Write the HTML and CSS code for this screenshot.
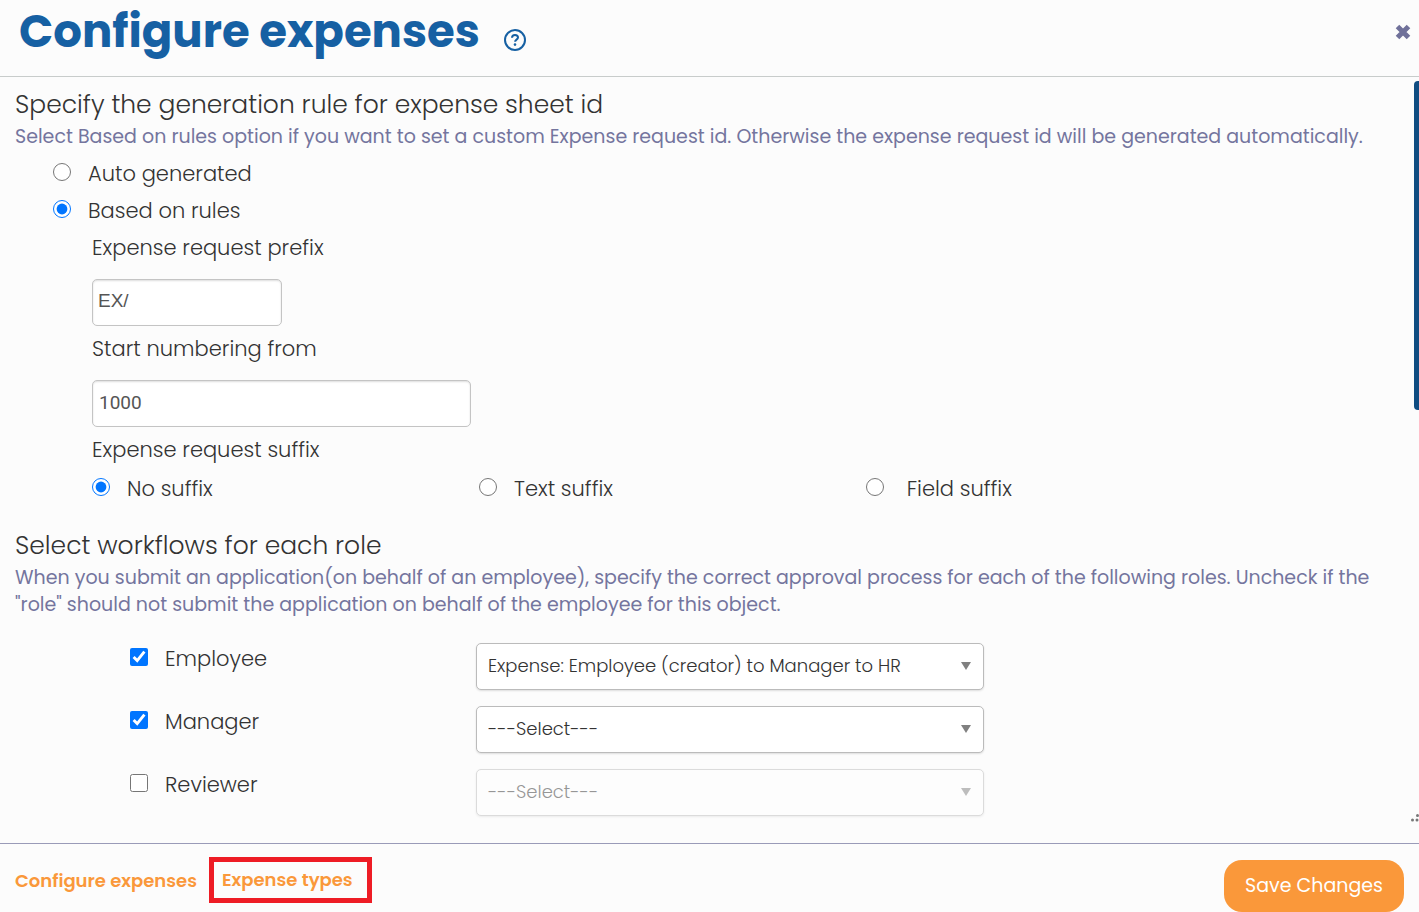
FILE: index.html
```html
<!DOCTYPE html>
<html lang="en">
<head>
	<meta charset="utf-8">
	<meta name="viewport" content="width=device-width, initial-scale=1">
	<title>Configure expenses</title>
	<link rel="stylesheet" href="styles.css">
</head>
<body>
<form class="dialog">
	<header class="dialog-header">
		<h1>Configure expenses</h1>
		<a class="help" href="#help" aria-label="Help">
			<svg width="24" height="24" viewBox="0 0 24 24" fill="none" stroke="currentColor" stroke-width="2">
				<circle cx="12" cy="12" r="10"/>
				<path d="M9 9.800C9 8 10.300 7 12 7s3 1 3 2.600c0 2-2.900 2.100-2.900 4.100"/>
				<circle cx="12" cy="16.600" r="1.300" fill="currentColor" stroke="none"/>
			</svg>
		</a>
		<button class="close" type="button" aria-label="Close">
			<svg width="16" height="16" viewBox="0 0 16 16" stroke="currentColor" stroke-width="5">
				<path d="M2.500 2.500l11 11M13.500 2.500l-11 11"/>
			</svg>
		</button>
	</header>

	<main class="dialog-body">
		<section>
			<h2>Specify the generation rule for expense sheet id</h2>
			<p class="hint">Select Based on rules option if you want to set a custom Expense request id. Otherwise the expense request id will be generated automatically.</p>
			<div class="rules">
				<label class="choice"><input type="radio" name="rule"> Auto generated</label>
				<label class="choice"><input type="radio" name="rule" checked> Based on rules</label>
			</div>
			<div class="fields">
				<label class="field-label" for="prefix">Expense request prefix</label>
				<input class="text short" id="prefix" type="text" value="EX/">
				<label class="field-label" for="start">Start numbering from</label>
				<input class="text" id="start" type="text" value="1000">
				<div class="field-label" id="suffix-label">Expense request suffix</div>
				<div class="suffixes" role="radiogroup" aria-labelledby="suffix-label">
					<label class="choice"><input type="radio" name="suffix" checked> No suffix</label>
					<label class="choice"><input type="radio" name="suffix"> Text suffix</label>
					<label class="choice"><input type="radio" name="suffix">&nbsp;Field suffix</label>
				</div>
			</div>
		</section>

		<section class="workflows">
			<h2>Select workflows for each role</h2>
			<p class="hint">When you submit an application(on behalf of an employee), specify the correct approval process for each of the following roles. Uncheck if the "role" should not submit the application on behalf of the employee for this object.</p>
			<div class="roles">
				<label class="choice"><input type="checkbox" checked> Employee</label>
				<div class="select">
					<select aria-label="Employee workflow"><option>Expense: Employee (creator) to Manager to HR</option></select>
				</div>
				<label class="choice"><input type="checkbox" checked> Manager</label>
				<div class="select">
					<select aria-label="Manager workflow"><option>---Select---</option></select>
				</div>
				<label class="choice"><input type="checkbox"> Reviewer</label>
				<div class="select disabled">
					<select aria-label="Reviewer workflow" disabled><option>---Select---</option></select>
				</div>
			</div>
		</section>
		<div class="scroll-thumb"></div>
		<svg class="grip" width="8" height="8" viewBox="0 0 8 8" fill="currentColor">
			<circle cx="6.500" cy="1.500" r="1.500"/>
			<circle cx="1.500" cy="6" r="1.500"/>
			<circle cx="6" cy="6" r="1.500"/>
		</svg>
	</main>

	<footer class="dialog-footer">
		<nav>
			<a href="#configure">Configure expenses</a>
			<a class="marked" href="#types">Expense types</a>
		</nav>
		<button class="save" type="submit">Save Changes</button>
	</footer>
</form>
</body>
</html>
```
FILE: styles.css
```css
* {
	box-sizing: border-box;
}
body {
	margin: 0;
	background: #fcfcfc;
	color: #333;
	font-family: Poppins, Inter, sans-serif;
	font-size: 21px;
	font-weight: 300;
}
h1, h2, p {
	margin: 0;
}
.dialog {
	display: flex;
	flex-direction: column;
	min-height: 100vh;
}

/* header */
.dialog-header {
	display: flex;
	align-items: center;
	height: 77px;
	padding: 0 8px 12px 19px;
	border-bottom: 1px solid #c8cccb;
	color: #1660a3;
}
h1 {
	font-size: 45px;
	line-height: 64px;
	font-weight: 700;
}
.help {
	display: flex;
	margin: 16px 0 0 23px;
	color: inherit;
}
.close {
	display: flex;
	margin-left: auto;
	padding: 0;
	border: 0;
	background: none;
	color: #70719a;
}

/* body */
.dialog-body {
	position: relative;
	flex: 1;
	padding: 10px 15px 0;
}
h2 {
	font-size: 25px;
	line-height: 36px;
	font-weight: 300;
}
.hint {
	color: #74759e;
	font-size: 19px;
	line-height: 27px;
	font-weight: 400;
}
.choice {
	display: flex;
	align-items: center;
	line-height: 37px;
}
.choice input {
	flex: none;
	width: 18px;
	height: 18px;
	margin: 0 17px 4px 0;
	accent-color: #0075ff;
}
.rules {
	padding: 5px 0 0 38px;
}
.fields {
	padding-left: 77px;
}
.field-label {
	display: block;
	line-height: 38px;
}
.text {
	display: block;
	width: 379px;
	height: 47px;
	margin: 12px 0 4px;
	padding: 0 6px 3px;
	border: 1px solid #c4c4c4;
	border-radius: 5px;
	box-shadow: inset 0 1px 2px #ddd;
	background: #fff;
	color: #555;
	font: 19px Roboto, sans-serif;
}
.text.short {
	width: 190px;
	padding-left: 5px;
	font-family: "Liberation Sans", Arial, sans-serif;
}
.suffixes {
	display: grid;
	grid-template-columns: repeat(3, 387px);
	padding-top: 1px;
}
.workflows {
	padding-top: 21px;
}
.roles {
	display: grid;
	grid-template-columns: 346px 508px;
	row-gap: 16px;
	padding: 25px 0 0 115px;
}
.roles .choice {
	align-self: start;
	line-height: 31px;
}
.select {
	position: relative;
}
.select select {
	display: block;
	width: 100%;
	height: 47px;
	padding: 0 36px 2px 11px;
	appearance: none;
	border: 1px solid #bbb;
	border-radius: 5px;
	box-shadow: 0 1px 2px #ddd;
	background: #fff;
	color: #333;
	font: inherit;
	font-size: 18px;
	opacity: 1;
}
.select::after {
	content: "";
	position: absolute;
	top: 19px;
	right: 13px;
	border: 5px solid transparent;
	border-top: 8px solid #808080;
	border-bottom: 0;
}
.select.disabled {
	opacity: .5;
}
.scroll-thumb {
	position: absolute;
	top: 4px;
	right: 0;
	width: 5px;
	height: 43%;
	border-radius: 4px 0 0 4px;
	background: #0f4c81;
}
.grip {
	position: absolute;
	right: 0;
	bottom: 21px;
	color: #777;
}

/* footer */
.dialog-footer {
	display: flex;
	justify-content: space-between;
	height: 69px;
	padding: 0 15px;
	border-top: 1px solid #9a9bb8;
}
nav {
	display: flex;
	align-items: center;
	gap: 12px;
	padding-top: 4px;
}
nav a {
	color: #fa983a;
	font-size: 18px;
	font-weight: 600;
	text-decoration: none;
}
nav .marked {
	padding: 7px 14px 7px 8px;
	border: 5px solid #ee1c25;
	line-height: 22px;
}
.save {
	height: 52px;
	margin-top: 16px;
	padding: 0 21px 2px;
	border: 0;
	border-radius: 18px;
	background: #fa983a;
	color: #fff;
	font: inherit;
	font-size: 19px;
	font-weight: 400;
}
```
